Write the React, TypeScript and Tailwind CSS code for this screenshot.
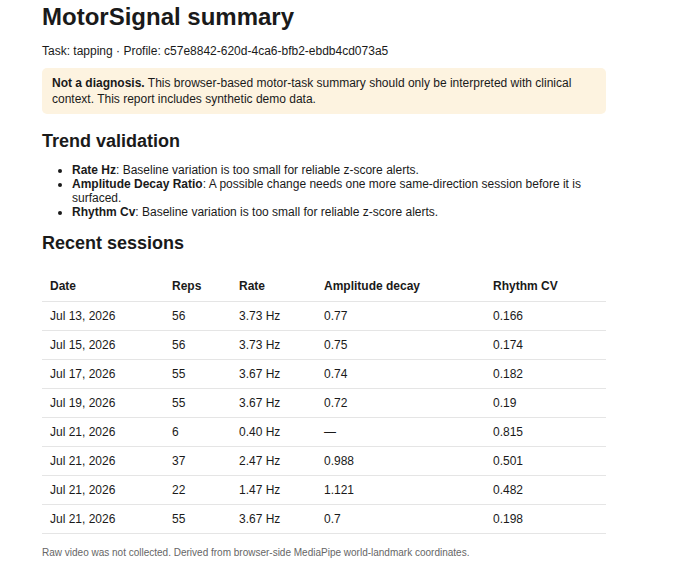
const rows = [
  ["Jul 13, 2026", "56", "3.73 Hz", "0.77", "0.166"],
  ["Jul 15, 2026", "56", "3.73 Hz", "0.75", "0.174"],
  ["Jul 17, 2026", "55", "3.67 Hz", "0.74", "0.182"],
  ["Jul 19, 2026", "55", "3.67 Hz", "0.72", "0.19"],
  ["Jul 21, 2026", "6", "0.40 Hz", "—", "0.815"],
  ["Jul 21, 2026", "37", "2.47 Hz", "0.988", "0.501"],
  ["Jul 21, 2026", "22", "1.47 Hz", "1.121", "0.482"],
  ["Jul 21, 2026", "55", "3.67 Hz", "0.7", "0.198"],
];

export default function App() {
  return (
    <div className="w-[698px] h-[573px] bg-white text-[#1a1a1a] pl-[42px] pr-[92px] pt-[2px]" style={{ fontFamily: "'Liberation Sans', Arial, sans-serif" }}>
      <h1 className="text-[24px] font-bold leading-[30px]">MotorSignal summary</h1>
      <p className="text-[12px] mt-[11px] leading-[16px]">Task: tapping · Profile: c57e8842-620d-4ca6-bfb2-ebdb4cd073a5</p>
      <div className="mt-[9px] bg-[#fdf3e0] rounded-[5px] px-[10px] py-[7px] text-[12px] leading-[16px]">
        <b>Not a diagnosis.</b> This browser-based motor-task summary should only be interpreted with clinical context. This report includes synthetic demo data.
      </div>
      <h2 className="text-[18px] font-bold mt-[15px] leading-[24px]">Trend validation</h2>
      <ul className="list-disc pl-[30px] mt-[10px] text-[12px] leading-[14px]">
        <li><b>Rate Hz</b>: Baseline variation is too small for reliable z-score alerts.</li>
        <li><b>Amplitude Decay Ratio</b>: A possible change needs one more same-direction session before it is surfaced.</li>
        <li><b>Rhythm Cv</b>: Baseline variation is too small for reliable z-score alerts.</li>
      </ul>
      <h2 className="text-[18px] font-bold mt-[12px] leading-[24px]">Recent sessions</h2>
      <table className="w-full mt-[17px] text-[12px] border-collapse">
        <thead>
          <tr className="border-b border-[#e5e5e5] h-[29px]">
            {["Date", "Reps", "Rate", "Amplitude decay", "Rhythm CV"].map((h, i) => (
              <th key={h} className={"text-left font-bold px-[8px] " + ["w-[122px]", "w-[67px]", "w-[85px]", "w-[169px]", ""][i]}>{h}</th>
            ))}
          </tr>
        </thead>
        <tbody>
          {rows.map((r, i) => (
            <tr key={i} className="border-b border-[#e5e5e5] h-[29px]">
              {r.map((c, j) => (
                <td key={j} className="px-[8px]">{c}</td>
              ))}
            </tr>
          ))}
        </tbody>
      </table>
      <p className="text-[10px] text-[#666] mt-[11px]">Raw video was not collected. Derived from browser-side MediaPipe world-landmark coordinates.</p>
    </div>
  );
}
